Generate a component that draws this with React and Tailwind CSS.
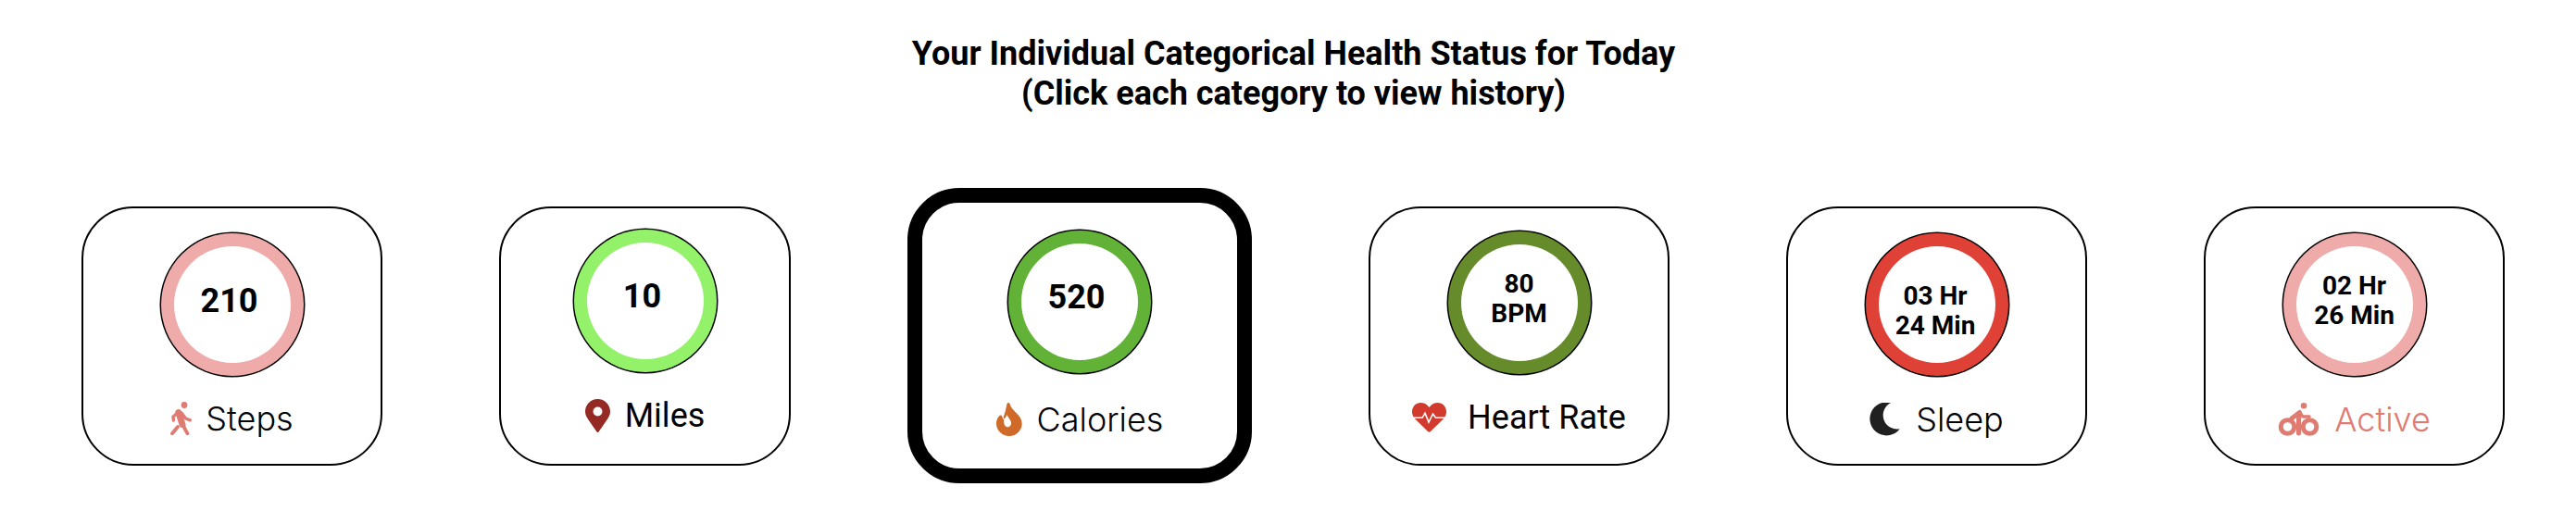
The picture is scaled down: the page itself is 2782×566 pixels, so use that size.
const WalkIcon = () => (
  <svg width="23" height="36" viewBox="0 0 23 36" fill="none" stroke="#e07b72" strokeLinecap="round" strokeLinejoin="round">
    <circle cx="15" cy="3.5" r="3.4" fill="#e07b72" stroke="none" />
    <path d="M8.8 11.5 L13 24.5" strokeWidth="7" />
    <path d="M9 11 L3 16 L3.4 20" strokeWidth="3.4" />
    <path d="M12 12 L16.5 18 L21.3 19.8" strokeWidth="3.4" />
    <path d="M13.5 25 L15 28 L18.5 34.3" strokeWidth="3.8" />
    <path d="M8 27 L2 34.3" strokeWidth="3.8" />
  </svg>
);

const PinIcon = () => (
  <svg width="27" height="36" viewBox="0 0 27 36">
    <path
      fill="#952a24"
      fillRule="evenodd"
      d="M13.5 0 C21 0 27 6 27 13.5 C27 17 25.5 19.5 23.5 22.5 L14.5 35.4 Q13.5 36.4 12.5 35.4 L3.5 22.5 C1.5 19.5 0 17 0 13.5 C0 6 6 0 13.5 0 Z M13.5 8.5 A5 5 0 1 0 13.5 18.5 A5 5 0 1 0 13.5 8.5 Z"
    />
  </svg>
);

const FlameIcon = () => (
  <svg width="28" height="36" viewBox="0 0 28 36">
    <path
      fill="#cf6a29"
      d="M11.5 1 C12.2 -0.3 14 -0.3 14.5 1 C15.5 5 18 7.5 21 10.5 C25 14 27.7 18 27.7 22.5 C27.7 30 21.5 36 14 36 C6.5 36 0 30 0 22.5 C0 19 1.2 16 3.5 14 C4.5 13 6 13.5 6.3 15 L7 17 C9 13 10.5 6 11.5 1 Z"
    />
    <path
      fill="#ffffff"
      d="M7.5 14.5 C8.6 17 8 20 8.4 22.5 C8.8 25.3 10.8 26.4 12.6 26.2 C15.6 25.8 16.8 22.8 15.6 20 C14.6 17.6 12.5 15.6 11.5 13 C10.6 15.5 9 17.5 7 18 Z"
    />
  </svg>
);

const HeartIcon = () => (
  <svg width="37" height="32" viewBox="0 0 37 32">
    <path
      fill="#d23a2d"
      d="M18.5 5 C15.5 1 12.5 0 9.5 0 C4 0 0 4.2 0 9.8 C0 13 1.2 15.5 3.5 17.8 L17 31 Q18.5 32.4 20 31 L33.5 17.8 C35.8 15.5 37 13 37 9.8 C37 4.2 33 0 27.5 0 C24.5 0 21.5 1 18.5 5 Z"
    />
    <path
      fill="none"
      stroke="#ffffff"
      strokeWidth="1.6"
      d="M0 16.3 H11 L14 11.3 L18 21 L22.5 12 L25.5 16.3 H37"
    />
  </svg>
);

const MoonIcon = () => (
  <svg width="33" height="36" viewBox="0 0 33 36">
    <path fill="#202020" d="M23 0 A18 18 0 1 0 32.7 28.3 A15.1 15.1 0 0 1 23 0 Z" />
  </svg>
);

const BikeIcon = () => (
  <svg width="45" height="36" viewBox="0 0 45 36" fill="none" stroke="#e07b72" strokeLinecap="round" strokeLinejoin="round">
    <circle cx="28" cy="3.3" r="3.3" fill="#e07b72" stroke="none" />
    <circle cx="10.5" cy="26" r="7.3" strokeWidth="5" />
    <circle cx="34.5" cy="26" r="7.3" strokeWidth="5" />
    <path d="M15 17 L23.5 10.5 L22.5 18 L22.5 33" strokeWidth="5" />
    <path d="M24 11 L27 15 L34 15" strokeWidth="3.4" />
  </svg>
);

const cards = [
  {
    lines: ["210"],
    label: "Steps",
    icon: <WalkIcon />,
    card: "w-[325px] h-[280px] border-2 pt-[26px]",
    ring: "bg-[#efaaaa]",
    value: "text-[36px] pb-[9px] pr-[6px]",
    row: "mt-[26px] gap-[15px] font-['Inter',sans-serif] font-light text-[36px] text-black",
  },
  {
    lines: ["10"],
    label: "Miles",
    icon: <PinIcon />,
    card: "w-[315px] h-[280px] border-2 pt-[22px]",
    ring: "bg-[#93f26a]",
    value: "text-[36px] pb-[10px] pr-[6px]",
    row: "mt-[27px] gap-[16px] font-['Roboto',sans-serif] text-[36px] text-black",
  },
  {
    lines: ["520"],
    label: "Calories",
    icon: <FlameIcon />,
    card: "w-[372px] h-[319px] border-[16px] pt-[28px]",
    ring: "bg-[#62b237]",
    value: "text-[36px] pb-[10px] pr-[7px]",
    row: "mt-[31px] gap-[16px] font-['Inter',sans-serif] font-light text-[36px] text-black",
  },
  {
    lines: ["80", "BPM"],
    label: "Heart Rate",
    icon: <HeartIcon />,
    card: "w-[325px] h-[280px] border-2 pt-[24px]",
    ring: "bg-[#668b2b]",
    value: "text-[28px] leading-[32px] pb-[9px]",
    row: "mt-[27px] gap-[23px] font-['Roboto',sans-serif] text-[36px] text-black",
  },
  {
    lines: ["03 Hr", "24 Min"],
    label: "Sleep",
    icon: <MoonIcon />,
    card: "w-[325px] h-[280px] border-2 pt-[26px]",
    ring: "bg-[#e04137]",
    value: "text-[28px] leading-[32px] pt-[13px] pr-[3px]",
    row: "mt-[27px] gap-[17px] font-['Inter',sans-serif] font-light text-[36px] text-black",
  },
  {
    lines: ["02 Hr", "26 Min"],
    label: "Active",
    icon: <BikeIcon />,
    card: "w-[325px] h-[280px] border-2 pt-[26px]",
    ring: "bg-[#efaaaa]",
    value: "text-[28px] leading-[32px] pb-[9px]",
    row: "mt-[27px] gap-[16px] font-['Inter',sans-serif] font-light text-[36px] text-[#e07b72]",
  },
];

function App() {
  return (
    <div className="w-[2782px] h-[566px] bg-white pt-[37px] font-['Roboto',sans-serif] text-black overflow-hidden">
      <h1 className="text-center pl-[12px] text-[36px] leading-[43px] font-bold">
        Your Individual Categorical Health Status for Today
        <br />
        (Click each category to view history)
      </h1>

      <div className="flex items-center gap-[126px] pl-[88px] mt-[80px]">
        {cards.map((item) => (
          <div
            key={item.label}
            className={`flex flex-col items-center shrink-0 rounded-[56px] border-black bg-white ${item.card}`}
          >
            <div className="w-[157px] h-[157px] p-[1.5px]">
              <div className={`w-full h-full rounded-full flex items-center justify-center shadow-[0_0_0_1.5px_#000] ${item.ring}`}>
                <div className={`w-[126px] h-[126px] rounded-full bg-white flex flex-col items-center justify-center font-bold ${item.value}`}>
                  {item.lines.map((line) => (
                    <span key={line}>{line}</span>
                  ))}
                </div>
              </div>
            </div>
            <div className={`flex items-center h-[36px] leading-[36px] ${item.row}`}>
              {item.icon}
              <span>{item.label}</span>
            </div>
          </div>
        ))}
      </div>
    </div>
  );
}

export default App;
